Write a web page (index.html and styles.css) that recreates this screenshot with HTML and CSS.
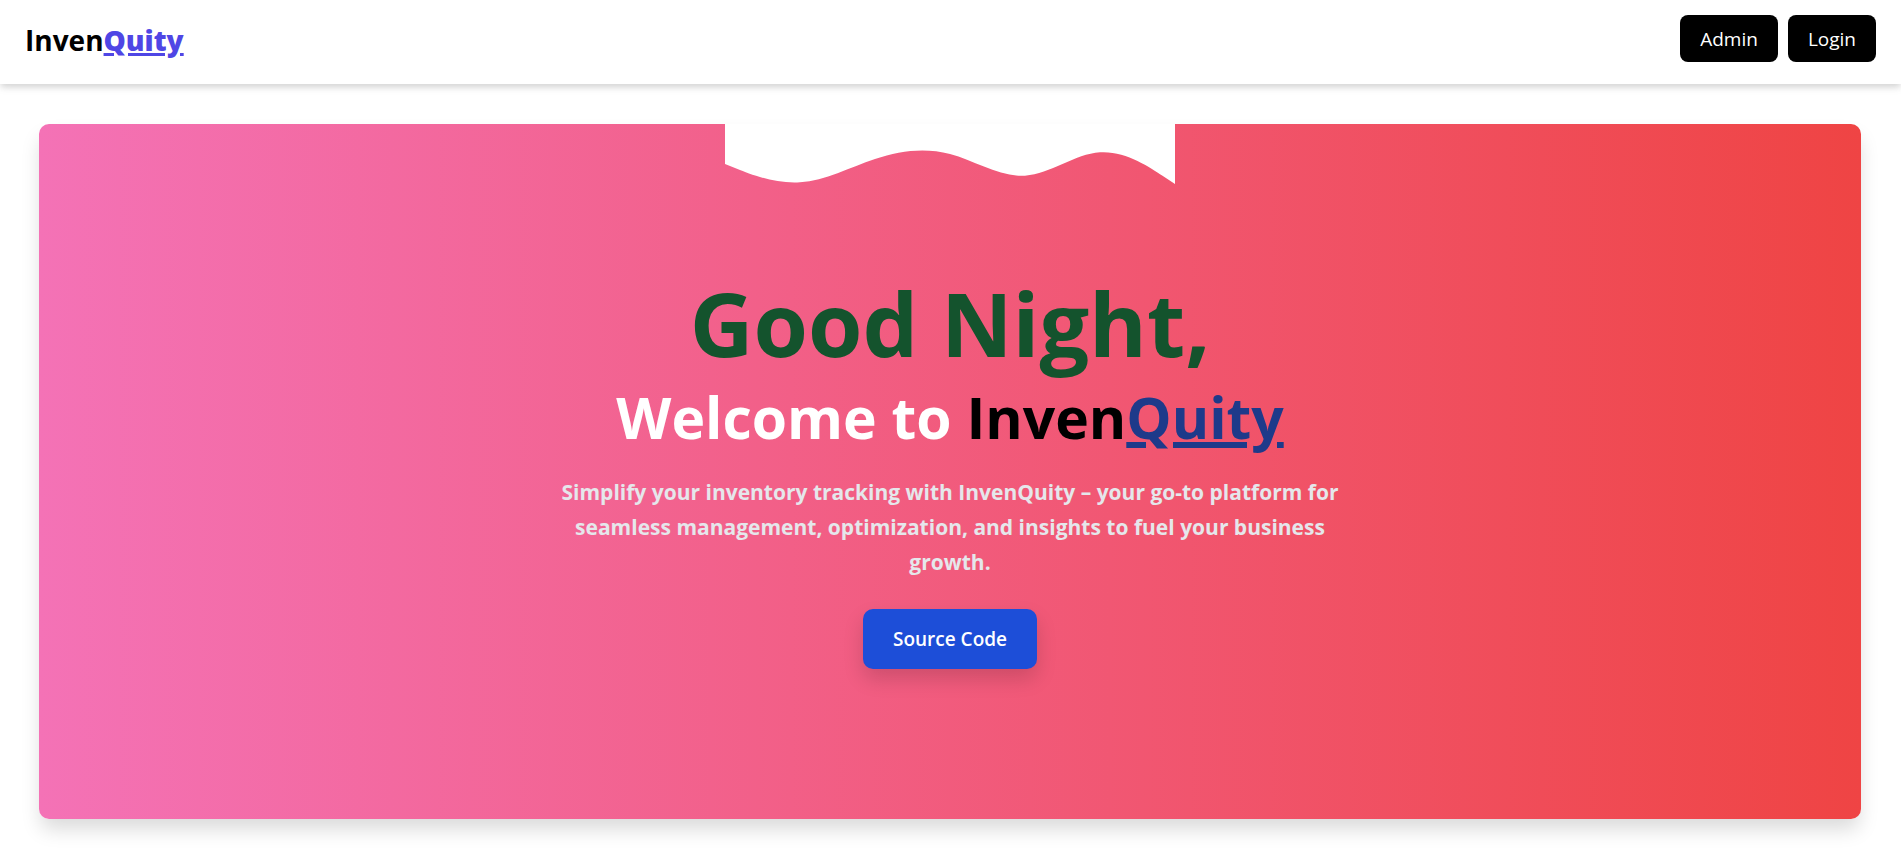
FILE: index.html
```html
<!DOCTYPE html>
<html lang="en">
<head>
  <meta charset="utf-8">
  <meta name="viewport" content="width=device-width, initial-scale=1">
  <title>InvenQuity</title>
  <link rel="stylesheet" href="styles.css">
</head>
<body>
  <header class="navbar">
    <a class="brand" href="#">Inven<span class="brand-accent">Quity</span></a>
    <nav class="nav-actions">
      <button class="nav-button" type="button">Admin</button>
      <button class="nav-button" type="button">Login</button>
    </nav>
  </header>
  <main class="page">
    <section class="hero">
      <svg class="hero-wave" viewBox="0 0 1440 320" aria-hidden="true">
        <path fill="#fff" d="M0,128L40,144C80,160,160,192,240,186.7C320,181,400,139,480,112C560,85,640,75,720,96C800,117,880,171,960,165.3C1040,160,1120,96,1200,90.7C1280,85,1360,139,1400,165.3L1440,192L1440,0L0,0Z"/>
      </svg>
      <h1 class="greeting">Good Night,</h1>
      <h2 class="welcome">Welcome to <span class="name">Inven</span><span class="name-accent">Quity</span></h2>
      <p class="tagline">Simplify your inventory tracking with InvenQuity – your go-to platform for seamless management, optimization, and insights to fuel your business growth.</p>
      <a class="source-link" href="#">Source Code</a>
    </section>
  </main>
</body>
</html>
```
FILE: styles.css
```css
* {
  box-sizing: border-box;
}

body {
  margin: 0;
  background: #fff;
  color: #000;
  font-family: "Segoe UI", "Open Sans", "Noto Sans", sans-serif;
}

.navbar {
  display: flex;
  justify-content: space-between;
  align-items: flex-start;
  padding: 15px 25px 19px;
  background: #fff;
  box-shadow: 0 4px 6px -1px rgba(0, 0, 0, 0.1), 0 2px 10px rgba(0, 0, 0, 0.1);
}

.brand {
  color: #000;
  font-size: 28px;
  line-height: 50px;
  font-weight: 700;
  text-decoration: none;
}

.brand-accent {
  color: #4f46e5;
  font-weight: 800;
  text-decoration: underline;
  text-decoration-thickness: 3px;
}

.nav-actions {
  display: flex;
  gap: 10px;
}

.nav-button {
  padding: 11px 20px 9px;
  border: 0;
  border-radius: 8px;
  background: #000;
  color: #fff;
  font: inherit;
  font-size: 19px;
  line-height: 27px;
}

.page {
  padding: 40px 40px 40px 39px;
}

.hero {
  position: relative;
  display: flex;
  flex-direction: column;
  align-items: center;
  padding: 149px 40px 150px;
  border-radius: 10px;
  background: linear-gradient(to right, #f472b6, #ef4444);
  box-shadow: 0 12px 20px -2px rgba(0, 0, 0, 0.15);
  text-align: center;
}

.hero-wave {
  position: absolute;
  top: 0;
  left: 50%;
  width: 450px;
  height: 100px;
  transform: translateX(-50%);
}

.greeting {
  margin: 0;
  color: #14532d;
  font-size: 88px;
  line-height: 100px;
  font-weight: 700;
}

.welcome {
  margin: 0 0 14px;
  color: #fff;
  font-size: 57px;
  line-height: 88px;
  font-weight: 700;
}

.name {
  color: #000;
}

.name-accent {
  color: #1e3a8a;
  text-decoration: underline;
  text-decoration-thickness: 6px;
}

.tagline {
  max-width: 800px;
  margin: 0 0 29px;
  color: #e5e7eb;
  font-size: 21px;
  line-height: 35px;
  font-weight: 700;
}

.source-link {
  padding: 15px 30px;
  border-radius: 10px;
  background: #1d4ed8;
  box-shadow: 0 10px 20px rgba(0, 0, 0, 0.15);
  color: #fff;
  font-size: 19px;
  line-height: 30px;
  font-weight: 600;
  text-decoration: none;
}
```
